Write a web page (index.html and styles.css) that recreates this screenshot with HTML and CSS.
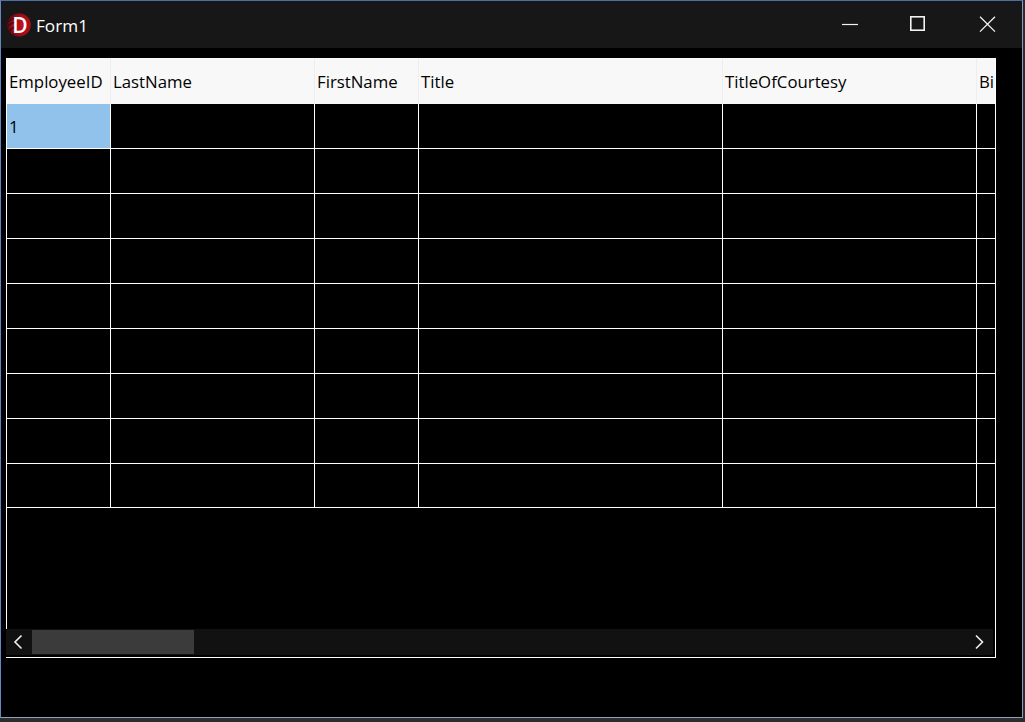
FILE: index.html
```html
<!DOCTYPE html>
<html lang="en">
<head>
<meta charset="utf-8">
<title>Form1</title>
<link rel="stylesheet" href="styles.css">
</head>
<body>
<div class="window">
  <header class="titlebar">
    <svg class="logo" width="24" height="24" viewBox="0 0 24 24">
      <defs>
        <radialGradient id="lg" cx="0.62" cy="0.5" r="0.62">
          <stop offset="0" stop-color="#c8101c"/>
          <stop offset="0.65" stop-color="#a00e18"/>
          <stop offset="1" stop-color="#58090e"/>
        </radialGradient>
      </defs>
      <circle cx="12" cy="12" r="11.8" fill="url(#lg)"/>
      <path d="M0.5 9.5c3-3 6-4.500 9-4M0.500 13.500c3-3 5-4 7.500-4M2 18.500c2-3 4-4 6-4.500" fill="none" stroke="#4a080c" stroke-width="1.400"/>
      <text x="13" y="19.500" class="logo-letter" text-anchor="middle">D</text>
    </svg>
    <span class="title">Form1</span>
    <div class="controls">
      <svg class="ctl" width="67" height="47" viewBox="0 0 67 47"><path d="M21 23.500h16" stroke="#f2f2f2" stroke-width="1.200" fill="none"/></svg>
      <svg class="ctl" width="67" height="47" viewBox="0 0 67 47"><rect x="22.800" y="15.800" width="13.400" height="13.400" stroke="#f2f2f2" stroke-width="1.600" fill="none"/></svg>
      <svg class="ctl" width="67" height="47" viewBox="0 0 67 47"><path d="M25 15.800l15 14.800M40 15.800l-15 14.800" stroke="#f2f2f2" stroke-width="1.300" fill="none"/></svg>
    </div>
  </header>
  <main class="client">
    <section class="grid">
      <div class="rows">
        <div class="row head">
          <div class="cell c1">EmployeeID</div><div class="cell c2">LastName</div><div class="cell c3">FirstName</div><div class="cell c4">Title</div><div class="cell c5">TitleOfCourtesy</div><div class="cell c6">BirthDate</div>
        </div>
        <div class="row"><div class="cell c1 selected">1</div><div class="cell c2"></div><div class="cell c3"></div><div class="cell c4"></div><div class="cell c5"></div><div class="cell c6"></div></div>
        <div class="row"><div class="cell c1"></div><div class="cell c2"></div><div class="cell c3"></div><div class="cell c4"></div><div class="cell c5"></div><div class="cell c6"></div></div>
        <div class="row"><div class="cell c1"></div><div class="cell c2"></div><div class="cell c3"></div><div class="cell c4"></div><div class="cell c5"></div><div class="cell c6"></div></div>
        <div class="row"><div class="cell c1"></div><div class="cell c2"></div><div class="cell c3"></div><div class="cell c4"></div><div class="cell c5"></div><div class="cell c6"></div></div>
        <div class="row"><div class="cell c1"></div><div class="cell c2"></div><div class="cell c3"></div><div class="cell c4"></div><div class="cell c5"></div><div class="cell c6"></div></div>
        <div class="row"><div class="cell c1"></div><div class="cell c2"></div><div class="cell c3"></div><div class="cell c4"></div><div class="cell c5"></div><div class="cell c6"></div></div>
        <div class="row"><div class="cell c1"></div><div class="cell c2"></div><div class="cell c3"></div><div class="cell c4"></div><div class="cell c5"></div><div class="cell c6"></div></div>
        <div class="row"><div class="cell c1"></div><div class="cell c2"></div><div class="cell c3"></div><div class="cell c4"></div><div class="cell c5"></div><div class="cell c6"></div></div>
        <div class="row last"><div class="cell c1"></div><div class="cell c2"></div><div class="cell c3"></div><div class="cell c4"></div><div class="cell c5"></div><div class="cell c6"></div></div>
      </div>
      <div class="scrollwrap">
        <div class="scrollbar">
          <svg class="arrow" width="26" height="26" viewBox="0 0 26 26"><path d="M15.500 6.500L9 13l6.500 6.500" stroke="#f0f0f0" stroke-width="1.600" fill="none"/></svg>
          <div class="thumb"></div>
          <div class="track"></div>
          <svg class="arrow" width="26" height="26" viewBox="0 0 26 26"><path d="M9 6.500L15.500 13l-6.500 6.500" stroke="#f0f0f0" stroke-width="1.600" fill="none"/></svg>
        </div>
      </div>
    </section>
  </main>
</div>
</body>
</html>
```
FILE: styles.css
```css
* { box-sizing: border-box; }
html, body { margin: 0; height: 100%; background: #2b2d30; overflow: hidden; }
body { font-family: "Open Sans", "Noto Sans", sans-serif; }
.window {
  width: 1023px;
  height: 718px;
  border-style: solid;
  border-width: 1px;
  border-color: #4a6ea5 #8a9cc0 #8fa0bd #6288c4;
  background: #000;
  display: flex;
  flex-direction: column;
}
.titlebar {
  height: 47px;
  flex: none;
  background: #171717;
  display: flex;
  align-items: center;
  padding-left: 6px;
  color: #fff;
}
.logo { flex: none; margin-top: 1px; }
.logo-letter { font: 600 21px "Open Sans", sans-serif; fill: #fff; }
.title { margin-left: 5px; font-size: 17.2px; padding-top: 1px; }
.controls { margin-left: auto; display: flex; }
.ctl { display: block; }
.client { flex: 1; padding: 10px 0 0 5px; }
.grid {
  width: 990px;
  height: 600px;
  border-left: 1px solid #fff;
  border-right: 1px solid #fff;
  border-bottom: 1px solid #fff;
  display: flex;
  flex-direction: column;
}
.rows { flex: 1; overflow: hidden; }
.row { display: flex; height: 45px; border-bottom: 1px solid #fff; }
.row.last { height: 44px; }
.row.head { height: 46px; border-bottom: 0; margin: 0 -1px; padding-left: 1px; padding-right: 1px; background: #f8f8f8; }
.cell {
  flex: none;
  height: 100%;
  border-right: 1px solid #fff;
  padding: 1px 0 0 2px;
  display: flex;
  align-items: center;
  white-space: nowrap;
  overflow: hidden;
  font-size: 16.8px;
  color: #000;
}
.head .cell { border-right-color: #eeeeee; }
.c1 { width: 104px; }
.c2 { width: 204px; }
.c3 { width: 104px; }
.c4 { width: 304px; }
.c5 { width: 254px; }
.c6 { width: 18px; border-right: 0; }
.selected { background: #91c2ec; color: #000; }
.scrollwrap { flex: none; height: 28px; margin-left: -1px; background: #000; }
.scrollbar { height: 26px; width: 987px; background: #111; display: flex; align-items: center; }
.arrow { flex: none; display: block; }
.thumb { width: 162px; height: 24px; background: #3b3b3b; flex: none; }
.track { flex: 1; }
```
